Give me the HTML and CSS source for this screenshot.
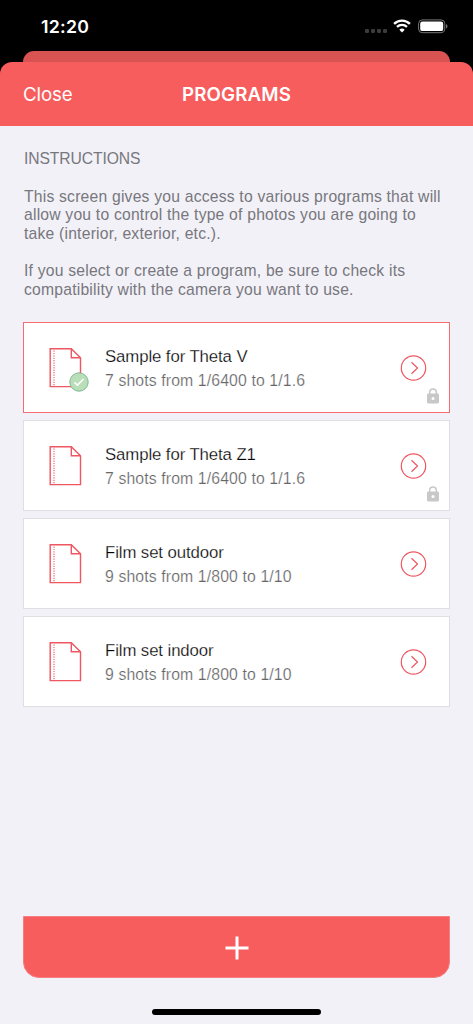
FILE: index.html
```
<!DOCTYPE html>
<html lang="en">
<head>
<meta charset="utf-8">
<title>Programs</title>
<link rel="stylesheet" href="styles.css">
</head>
<body>
<svg class="defs" width="0" height="0" aria-hidden="true">
  <symbol id="file" viewBox="0 0 34 42">
    <path d="M1.2 1.7H22.3L31.5 10.8V39.6H1.2Z" fill="none" stroke="#ee5660" stroke-width="1.4"/>
    <path d="M22.3 1.7V10.8H31.5" fill="none" stroke="#ee5660" stroke-width="1.4"/>
    <path d="M5 3.5V38.5" fill="none" stroke="#ee5660" stroke-width="1.1" stroke-dasharray="1.2 1.2"/>
  </symbol>
  <symbol id="arrow" viewBox="0 0 28 28">
    <circle cx="13.5" cy="14" r="12.2" fill="none" stroke="#ee5660" stroke-width="1.2"/>
    <path d="M11.5 8.2L17.5 14L11.5 19.8" fill="none" stroke="#ee5660" stroke-width="1.2"/>
  </symbol>
  <symbol id="lock" viewBox="0 0 12 16">
    <path d="M2.7 6.5V4.2a3.3 3.3 0 0 1 6.6 0V6.5" fill="none" stroke="#c8c8c8" stroke-width="1.5"/>
    <rect x="0" y="5.4" width="12" height="10" rx="1.3" fill="#c8c8c8"/>
    <circle cx="6" cy="10.4" r="1.5" fill="#fff"/>
  </symbol>
</svg>
<div class="screen">
  <div class="status">
    <span class="time">12:20</span>
    <div class="indicators">
      <span class="dots"><i></i><i></i><i></i><i></i></span>
      <svg class="wifi" width="18" height="14" viewBox="0 0 18 14">
        <path d="M1.1 4.8a11.3 11.3 0 0 1 15.8 0" fill="none" stroke="#fff" stroke-width="2.4"/>
        <path d="M4 7.9a7.2 7.2 0 0 1 10 0" fill="none" stroke="#fff" stroke-width="2.2"/>
        <path d="M9 13.5L6.3 10.8a3.9 3.9 0 0 1 5.4 0Z" fill="#fff"/>
      </svg>
      <svg class="battery" width="30" height="15" viewBox="0 0 30 15">
        <rect x=".6" y=".9" width="26.2" height="12.8" rx="3.7" fill="none" stroke="#777" stroke-width="1"/>
        <rect x="2.2" y="2.5" width="23" height="9.6" rx="2.2" fill="#fff"/>
        <path d="M28 5.1c2 .8 2 3.6 0 4.4Z" fill="#777"/>
      </svg>
    </div>
  </div>
  <div class="behind"></div>
  <div class="sheet">
    <header class="nav">
      <span class="close">Close</span>
      <h1 class="title">PROGRAMS</h1>
      <span></span>
    </header>
    <main class="content">
      <h2 class="heading">INSTRUCTIONS</h2>
      <p class="copy">This screen gives you access to various programs that will<br>allow you to control the type of photos you are going to<br>take (interior, exterior, etc.).</p>
      <p class="copy">If you select or create a program, be sure to check its<br>compatibility with the camera you want to use.</p>
      <div class="list">
        <div class="card selected">
          <div class="icon"><svg width="34" height="42"><use href="#file"/></svg>
            <svg class="badge" width="20" height="20" viewBox="0 0 20 20"><circle cx="10" cy="10" r="9.2" fill="#b9dfb9" stroke="#80b896" stroke-width="1"/><path d="M5.4 10.4L8.5 13.1L14.5 7" fill="none" stroke="#fff" stroke-width="1.5"/></svg>
          </div>
          <div class="text"><span class="name">Sample for Theta V</span><span class="detail">7 shots from 1/6400 to 1/1.6</span></div>
          <svg class="arrow" width="28" height="28"><use href="#arrow"/></svg>
          <svg class="lock" width="12" height="16"><use href="#lock"/></svg>
        </div>
        <div class="card">
          <div class="icon"><svg width="34" height="42"><use href="#file"/></svg></div>
          <div class="text"><span class="name">Sample for Theta Z1</span><span class="detail">7 shots from 1/6400 to 1/1.6</span></div>
          <svg class="arrow" width="28" height="28"><use href="#arrow"/></svg>
          <svg class="lock" width="12" height="16"><use href="#lock"/></svg>
        </div>
        <div class="card">
          <div class="icon"><svg width="34" height="42"><use href="#file"/></svg></div>
          <div class="text"><span class="name">Film set outdoor</span><span class="detail">9 shots from 1/800 to 1/10</span></div>
          <svg class="arrow" width="28" height="28"><use href="#arrow"/></svg>
        </div>
        <div class="card">
          <div class="icon"><svg width="34" height="42"><use href="#file"/></svg></div>
          <div class="text"><span class="name">Film set indoor</span><span class="detail">9 shots from 1/800 to 1/10</span></div>
          <svg class="arrow" width="28" height="28"><use href="#arrow"/></svg>
        </div>
      </div>
    </main>
    <footer class="footer">
      <div class="add"><svg width="24" height="24" viewBox="0 0 24 24"><path d="M12 .5V23.5M.5 12H23.5" stroke="#fff" stroke-width="3"/></svg></div>
      <div class="home"></div>
    </footer>
  </div>
</div>
</body>
</html>
```
FILE: styles.css
```
* { box-sizing: border-box; }
body { margin: 0; background: #000; font-family: "Liberation Sans", Arial, sans-serif; }
svg { display: block; }
.defs { position: absolute; }
.screen { width: 473px; height: 1024px; display: flex; flex-direction: column; overflow: hidden; background: #000; }
.status { height: 51px; flex: none; display: flex; justify-content: space-between; padding: 16px 25px 0 41px; color: #fff; }
.time { font: 600 17.7px/21px Inter, sans-serif; letter-spacing: .25px; }
.indicators { display: flex; height: 20px; align-items: center; }
.dots { display: flex; gap: 1.8px; margin: 9px 6.5px 0 0; }
.dots i { width: 4px; height: 4px; border-radius: 1.3px; background: #3c3c3c; }
.wifi { margin-right: 7px; }
.behind { height: 11px; flex: none; margin: 0 23px; border-radius: 11px 11px 0 0; background: #da5353; }
.sheet { flex: 1; display: flex; flex-direction: column; background: linear-gradient(#000 0 20px, #f2f1f7 20px); }
.nav { height: 64px; flex: none; display: grid; grid-template-columns: 1fr auto 1fr; align-items: center; padding: 0 23px; background: #f75d5d; border-radius: 12px 12px 0 0; color: #fff; font-family: Inter, sans-serif; }
.close { font-size: 18.7px; letter-spacing: -.1px; }
.title { margin: 0; font-size: 18.7px; font-weight: 600; letter-spacing: .15px; }
.content { flex: 1; padding: 24px 23px 0; }
.heading { margin: 0 0 19px 1px; font-size: 15.7px; line-height: 18.6px; font-weight: 400; letter-spacing: -.1px; color: #77777d; }
.copy { margin: 0 0 18.6px 1px; font-size: 15.7px; line-height: 18.6px; letter-spacing: .21px; color: #77777d; white-space: nowrap; }
.list { display: flex; flex-direction: column; gap: 7.2px; margin-top: 22.6px; }
.card { position: relative; height: 91px; display: flex; align-items: center; padding: 1px 21.5px 0 25px; border: 1px solid #dedee3; background: #fff; }
.selected { border-color: #f66d70; }
.icon { position: relative; width: 34px; }
.badge { position: absolute; left: 19.5px; top: 25px; }
.text { flex: 1; display: flex; flex-direction: column; margin: 1.6px 0 0 22px; white-space: nowrap; }
.name { font-size: 16.8px; line-height: 24px; letter-spacing: -.1px; color: #000; -webkit-text-stroke: .25px #fff; }
.detail { font-size: 15.8px; line-height: 24px; letter-spacing: .12px; color: #666; -webkit-text-stroke: .2px #fff; }
.lock { position: absolute; right: 10px; bottom: 7.5px; }
.footer { flex: none; padding: 0 23px 9px; display: flex; flex-direction: column; align-items: center; }
.add { width: 427px; height: 62px; display: flex; align-items: center; justify-content: center; border-radius: 0 0 16px 16px; background: #f75d5d; border: .5px solid #f67e80; padding: 2px 0 0; }
.home { width: 169px; height: 6px; border-radius: 3px; margin-top: 31px; background: #000; }
```
